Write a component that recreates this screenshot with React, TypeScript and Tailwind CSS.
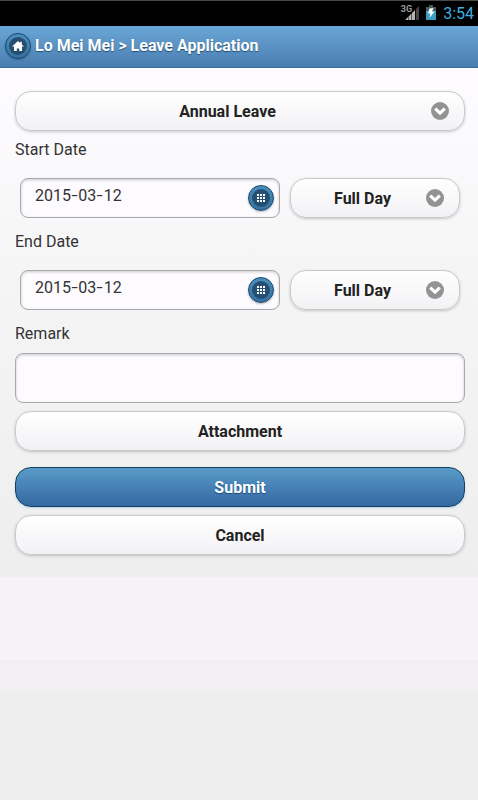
import { useState } from "react";
import type { ReactNode } from "react";

interface DateRowProps {
  label: string;
  date: string;
  period: string;
}

function SignalIcon() {
  return (
    <svg width="14" height="15" viewBox="0 0 14 15" className="-ml-[7px] mt-[4px]">
      <path d="M0 15L3 12V15Z M3.5 11.5L6.5 8.5V15H3.5Z M7 8L10 5V15H7Z" fill="#b4b4b4" />
      <path d="M11 4L14 1V15H11Z" fill="#454545" />
    </svg>
  );
}

function BatteryIcon() {
  return (
    <svg width="10" height="15" viewBox="0 0 10 15">
      <path d="M3 0H7V2H10V15H0V2H3Z" fill="#4a5a62" />
      <path d="M0 6H10V15H0Z" fill="#3b9dc4" />
      <path d="M3.5 3.5L7.5 3L6 6.5H8.5L3.5 13L4.5 8.5H2Z" fill="#fff" />
    </svg>
  );
}

function ArrowIcon() {
  return (
    <svg width="18" height="18" viewBox="0 0 18 18" className="shrink-0">
      <circle cx="9" cy="9" r="9" fill="#939393" />
      <path d="M4.2 6.6L9 11.1L13.8 6.6" fill="none" stroke="#fff" strokeWidth="3.2" />
    </svg>
  );
}

function RoundButton({ children }: { children: ReactNode }) {
  return (
    <button className="flex size-[26px] shrink-0 items-center justify-center rounded-full border border-[#124570] bg-linear-to-b from-[#4b8fbe] to-[#38729f] shadow-[0_1px_2px_rgba(0,0,0,0.25)]">
      <span className="flex size-[18px] items-center justify-center rounded-full bg-[#254e70]">{children}</span>
    </button>
  );
}

function HomeIcon() {
  return (
    <svg width="12" height="10" viewBox="0 0 12 10">
      <path d="M6 0L8.2 2V0.8H9.8V3.5L12 5.6H10V10H7.2V7.4H4.8V10H2V5.6H0Z" fill="#fff" />
    </svg>
  );
}

function GridIcon() {
  return (
    <svg width="8" height="8" viewBox="0 0 8 8">
      <path d="M0 0H2V2H0ZM3 0H5V2H3ZM6 0H8V2H6ZM0 3H2V5H0ZM3 3H5V5H3ZM6 3H8V5H6ZM0 6H2V8H0ZM3 6H5V8H3ZM6 6H8V8H6Z" fill="#fff" />
    </svg>
  );
}

function SelectButton({ children, className }: { children: ReactNode; className: string }) {
  return (
    <button
      className={`flex h-10 items-center rounded-2xl border border-[#c9c9cc] bg-linear-to-b from-white to-[#f3f1f4] font-bold text-[#222] shadow-[0_1px_3px_rgba(0,0,0,0.2)] ${className}`}
    >
      <span className="flex-1 pt-0.5 text-center">{children}</span>
      <ArrowIcon />
    </button>
  );
}

function PlainButton({ children }: { children: ReactNode }) {
  return (
    <button className="block h-10 w-full rounded-2xl border border-[#c9c9cc] bg-linear-to-b from-white to-[#f3f1f4] pt-0.5 font-bold text-[#222] shadow-[0_1px_3px_rgba(0,0,0,0.2)]">
      {children}
    </button>
  );
}

function DateRow({ label, date, period }: DateRowProps) {
  const [year, month, day] = date.split("-");
  const dash = <span className="inline-block w-[7.4px] scale-x-140 text-center">-</span>;

  return (
    <div className="h-[92px]">
      <label className="block h-[47px] pt-[9px] leading-5">{label}</label>
      <div className="flex gap-2.5 px-[5px]">
        <div className="flex h-10 w-[260px] items-center rounded-lg border border-[#aaa9ad] bg-[#fdfbfe] pr-[5px] pl-[14px] shadow-[inset_0_1px_3px_rgba(0,0,0,0.2)]">
          <span className="mb-[5px] flex-1">
            {year}{dash}{month}{dash}{day}
          </span>
          <RoundButton><GridIcon /></RoundButton>
        </div>
        <SelectButton className="w-[170px] pr-[15px] pl-[8px]">{period}</SelectButton>
      </div>
    </div>
  );
}

export default function App() {
  const [remark, setRemark] = useState("");

  return (
    <div className="flex h-[800px] w-[478px] flex-col overflow-hidden bg-[#eee] font-[Roboto,sans-serif] text-base leading-5 text-[#333]">
      <div className="flex h-[26px] shrink-0 justify-end border-t border-[#484848] bg-black pr-[4px]">
        <span className="mt-[4px] text-[9px] leading-[9px] font-bold text-[#999]">3G</span>
        <SignalIcon />
        <span className="mt-[4px] ml-[7px]"><BatteryIcon /></span>
        <span className="mt-[3px] ml-[7px] text-[16px] leading-5 text-[#3fafe0]">3:54</span>
      </div>

      <header className="flex h-[42px] shrink-0 items-center border-b border-[#3c6c97] bg-linear-to-b from-[#6aa7d6] to-[#4a7db1] pb-[2px] pl-[5px]">
        <RoundButton><HomeIcon /></RoundButton>
        <h1 className="ml-[4px] font-bold whitespace-nowrap text-white [text-shadow:0_1px_1px_#245070]">
          Lo Mei Mei &gt; Leave Application
        </h1>
      </header>

      <main className="h-[509px] shrink-0 bg-linear-to-b from-[#fefcff] via-[#f6f5f6] via-40% to-[#eee] pt-[23px] pr-[13px] pl-[15px]">
        <div className="w-[450px]">
          <SelectButton className="w-full pr-[15px] pl-[8px]">Annual Leave</SelectButton>
          <DateRow label="Start Date" date="2015-03-12" period="Full Day" />
          <DateRow label="End Date" date="2015-03-12" period="Full Day" />
          <label className="block h-[38px] pt-[9px] leading-5">Remark</label>
          <textarea
            value={remark}
            onChange={(e) => setRemark(e.target.value)}
            className="block h-[50px] w-full resize-none rounded-lg border border-[#aaa9ad] bg-[#fdfbfe] p-2 shadow-[inset_0_1px_3px_rgba(0,0,0,0.2)] outline-none"
          />
          <div className="mt-2"><PlainButton>Attachment</PlainButton></div>
          <button className="mt-4 mb-2 block h-10 w-full rounded-2xl border border-[#15415f] bg-linear-to-b from-[#5a9bc8] to-[#3468a2] pt-0.5 font-bold text-white shadow-[0_1px_2px_rgba(120,180,230,0.5)] [text-shadow:0_1px_1px_#194b7e]">
            Submit
          </button>
          <PlainButton>Cancel</PlainButton>
        </div>
      </main>

      <div className="h-[83px] shrink-0 bg-[#f6f3f7]" />
      <div className="h-[33px] shrink-0 bg-[#f1eff2]" />
    </div>
  );
}
